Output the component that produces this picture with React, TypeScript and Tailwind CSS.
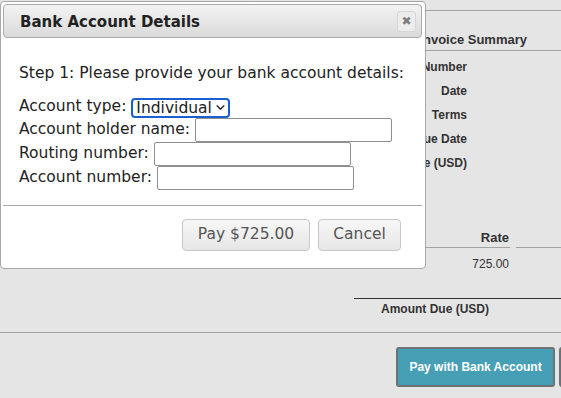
import { useState } from 'react';

const SUMMARY_ROWS = ['Number', 'Date', 'Terms', 'Due Date', 'Due (USD)'];

function Field({ label, width = 'w-[197px]' }: { label: string; width?: string }) {
  return (
    <div className="flex h-[24px] items-center">
      <label className="whitespace-nowrap">{label}</label>
      <input
        type="text"
        className={`ml-[5px] h-[24px] ${width} rounded-[2px] border border-[#8f8f8f] bg-white px-1 outline-none`}
      />
    </div>
  );
}

export default function App() {
  const [accountType, setAccountType] = useState('individual');

  return (
    <div className="relative h-[398px] w-full overflow-hidden bg-[#e5e5e5] font-['Liberation_Sans',Arial,sans-serif] text-[12px] text-[#333]">
      {/* Invoice page behind the dialog */}
      <div className="pt-[10px]">
        <div className="ml-[300px] flex h-[41px] items-end justify-end border-y border-[#a3a3a3] pb-[1px] pr-[34px]">
          <span className="text-[13px] font-bold">Invoice Summary</span>
        </div>

        <div className="mt-[4px] w-[467px] text-right font-bold">
          {SUMMARY_ROWS.map((row) => (
            <div key={row} className="h-[24px] leading-[24px]">
              {row}
            </div>
          ))}
        </div>

        <div className="ml-[300px] mt-[53px] flex gap-[6px]">
          <div className="h-[20px] w-[210px] border-b border-[#a3a3a3] pr-[1px] text-right text-[13px] font-bold leading-[20px]">
            Rate
          </div>
          <div className="h-[20px] flex-1 border-b border-[#a3a3a3]" />
        </div>
        <div className="ml-[300px] mt-[4px] w-[210px] pr-[1px] text-right leading-[24px]">725.00</div>

        <div className="ml-[354px] mt-[22px] border-t border-[#333]">
          <div className="pl-[27px] font-bold leading-[20px]">Amount Due (USD)</div>
        </div>

        <div className="mt-[13px] border-t border-[#a3a3a3]" />

        <div className="mt-[14px] flex gap-[4px] pl-[396px]">
          <button className="h-[40px] w-[159px] shrink-0 rounded-[3px] border-2 border-[#6b7376] bg-[#479fb5] text-[12px] font-bold text-white">
            Pay with Bank Account
          </button>
          <button className="h-[40px] w-[159px] shrink-0 rounded-[3px] border-2 border-[#6b7376] bg-[#479fb5] text-[12px] font-bold text-white" />
        </div>
      </div>

      {/* Modal dialog */}
      <div className="absolute left-0 top-[1px] h-[268px] w-[426px] rounded-[4px] border border-[#a8a8a8] bg-white p-[2px] pr-[3px] font-['DejaVu_Sans',Verdana,sans-serif] text-[15.5px] text-[#222]">
        <div className="flex h-[34px] items-center justify-between rounded-[4px] border border-[#aaa] bg-gradient-to-b from-[#f3f3f3] to-[#dadada] pl-[16px] pr-[5px]">
          <span className="pt-[2px] text-[15px] font-bold">Bank Account Details</span>
          <button className="flex h-[21px] w-[19px] items-center justify-center rounded-[3px] border border-[#d6d6d6] bg-[#ececec] text-[12px] leading-none text-[#7d7d7d]">
            ✖
          </button>
        </div>

        <div className="pl-[16px]">
          <p className="mt-[23px] leading-[24px]">Step 1: Please provide your bank account details:</p>

          <div className="mt-[10px]">
            <div className="flex h-[23px] items-center">
              <label>Account type:</label>
              <div className="relative ml-[5px] h-[20px] w-[99px]">
                <select
                  value={accountType}
                  onChange={(e) => setAccountType(e.target.value)}
                  className="h-[20px] w-[99px] appearance-none rounded-[4px] border-2 border-[#1a5fd0] bg-white pl-[3px] leading-[16px] outline-none"
                >
                  <option value="individual">Individual</option>
                  <option value="business">Business</option>
                </select>
                <svg
                  viewBox="0 0 10 6"
                  className="pointer-events-none absolute right-[5px] top-[8px] h-[5px] w-[9px]"
                  fill="none"
                  stroke="#222"
                  strokeWidth="1.6"
                  strokeLinecap="round"
                  strokeLinejoin="round"
                >
                  <path d="M1 1l4 4 4-4" />
                </svg>
              </div>
            </div>
            <Field label="Account holder name:" />
            <Field label="Routing number:" />
            <Field label="Account number:" />
          </div>
        </div>

        <div className="mt-[15px] border-t border-[#a8a8a8]" />

        <div className="mt-[13px] flex justify-end gap-[8px] pr-[21px]">
          <button className="h-[32px] w-[128px] rounded-[4px] border border-[#c8c8c8] bg-gradient-to-b from-[#f7f7f7] to-[#e6e6e6] text-[#555]">
            Pay $725.00
          </button>
          <button className="h-[32px] w-[83px] rounded-[4px] border border-[#c8c8c8] bg-gradient-to-b from-[#f7f7f7] to-[#e6e6e6] text-[#555]">
            Cancel
          </button>
        </div>
      </div>
    </div>
  );
}
